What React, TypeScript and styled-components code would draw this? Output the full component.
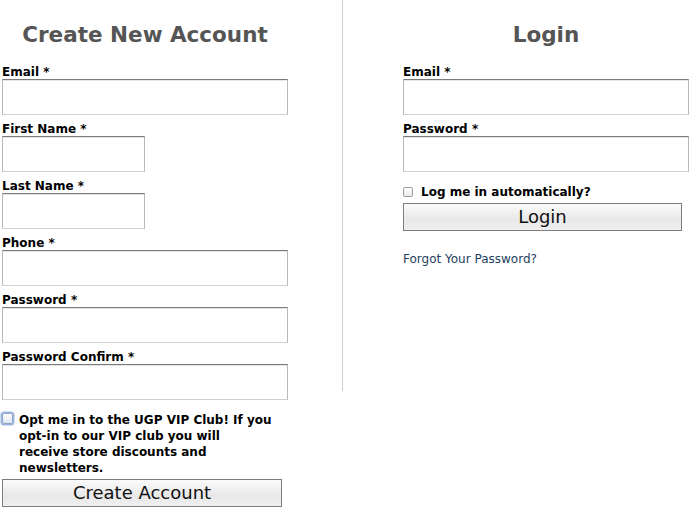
import React from "react";
import styled, { createGlobalStyle } from "styled-components";

const GlobalStyle = createGlobalStyle`
  html, body {
    margin: 0;
    padding: 0;
    background: #ffffff;
    font-family: "DejaVu Sans", Verdana, sans-serif;
    color: #000;
  }
`;

type Field = { label: string; short?: boolean; type?: string };

const signupFields: Field[] = [
  { label: "Email" },
  { label: "First Name", short: true },
  { label: "Last Name", short: true },
  { label: "Phone" },
  { label: "Password", type: "password" },
  { label: "Password Confirm", type: "password" },
];

const loginFields: Field[] = [
  { label: "Email" },
  { label: "Password", type: "password" },
];

const App = () => {
  return (
    <>
      <GlobalStyle />
      <Page>
        <SignupColumn>
          <Form>
            <Heading>Create New Account</Heading>
            {signupFields.map((field) => (
              <FieldBlock key={field.label}>
                <Label>{field.label} *</Label>
                <TextInput $short={field.short} type={field.type ?? "text"} />
              </FieldBlock>
            ))}
            <OptIn>
              <AquaCheck />
              <OptText>
                Opt me in to the UGP VIP Club! If you opt-in to our VIP club you
                will receive store discounts and newsletters.
              </OptText>
            </OptIn>
            <Button $width={280}>Create Account</Button>
          </Form>
        </SignupColumn>
        <LoginColumn>
          <Form>
            <Heading>Login</Heading>
            {loginFields.map((field) => (
              <FieldBlock key={field.label}>
                <Label>{field.label} *</Label>
                <TextInput type={field.type ?? "text"} />
              </FieldBlock>
            ))}
            <Remember>
              <SmallCheck />
              <RememberText>Log me in automatically?</RememberText>
            </Remember>
            <Button $width={279}>Login</Button>
            <ForgotLink href="#">Forgot Your Password?</ForgotLink>
          </Form>
        </LoginColumn>
      </Page>
    </>
  );
};

export default App;

const Page = styled.div`
  display: grid;
  grid-template-columns: 342px 1fr;
  align-items: start;
  width: 692px;
`;

const SignupColumn = styled.section`
  padding-left: 2px;
  box-sizing: border-box;
`;

const LoginColumn = styled.section`
  border-left: 1px solid #cfcfcf;
  height: 391px;
  padding-left: 60px;
  box-sizing: border-box;
`;

const Form = styled.div`
  width: 286px;
  display: flex;
  flex-direction: column;
`;

const Heading = styled.h2`
  margin: 0 0 18px;
  padding-top: 22px;
  text-align: center;
  font-size: 21.5px;
  line-height: 26px;
  font-weight: bold;
  color: #555555;
`;

const FieldBlock = styled.div`
  display: flex;
  flex-direction: column;
  margin-bottom: 8px;
`;

const Label = styled.label`
  font-size: 12px;
  line-height: 13px;
  font-weight: bold;
  color: #000;
`;

const TextInput = styled.input<{ $short?: boolean }>`
  width: ${(p) => (p.$short ? "143px" : "286px")};
  height: 36px;
  box-sizing: border-box;
  margin: 0;
  border-style: solid;
  border-width: 1px;
  border-color: #7a7a7a #b8b8b8 #d0d0d0 #b8b8b8;
  box-shadow: inset 0 1px 0 #e6e6e6;
  background: #fff;
`;

const OptIn = styled.label`
  display: flex;
  align-items: flex-start;
  gap: 6px;
  margin-top: 2px;
`;

const AquaCheck = styled.span`
  flex: none;
  width: 9px;
  height: 9px;
  margin-top: 3px;
  border: 1px solid #8ea3c8;
  border-radius: 2px;
  background: linear-gradient(#ffffff, #dfe6f2);
  box-shadow: 0 0 0 1.5px #9fb6e0;
`;

const OptText = styled.span`
  flex: none;
  width: 253px;
  padding-top: 2px;
  font-size: 12px;
  line-height: 16px;
  font-weight: bold;
`;

const Button = styled.button<{ $width: number }>`
  width: ${(p) => p.$width}px;
  height: 28px;
  margin-top: 3px;
  padding: 0;
  border: 1px solid #7d7d7d;
  background: linear-gradient(#fbfbfb, #e8e8e8 60%, #efefef);
  font-family: "DejaVu Sans", Verdana, sans-serif;
  font-size: 18px;
  line-height: 24px;
  color: #111;
`;

const Remember = styled.label`
  display: flex;
  align-items: center;
  gap: 8px;
  margin-top: 4px;
`;

const SmallCheck = styled.span`
  flex: none;
  width: 8px;
  height: 8px;
  border: 1px solid #9a9a9a;
  border-radius: 2px;
  background: linear-gradient(#ffffff, #ececec);
`;

const RememberText = styled.span`
  font-size: 12px;
  line-height: 16px;
  font-weight: bold;
`;

const ForgotLink = styled.a`
  margin-top: 21px;
  font-size: 12px;
  line-height: 14px;
  color: #1d3e5e;
  text-decoration: none;
`;
